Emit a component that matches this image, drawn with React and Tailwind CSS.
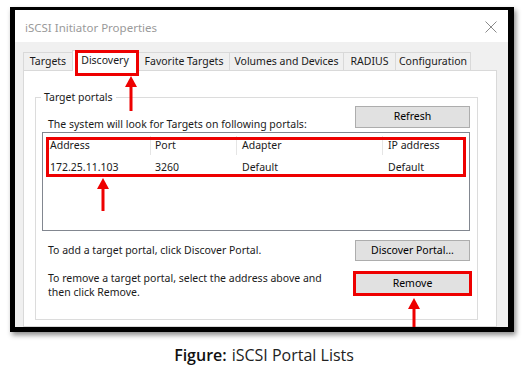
import React from 'react';

const ui = { fontFamily: '"Noto Sans", "Open Sans", sans-serif' };

function Arrow({ className, length }) {
  return (
    <svg className={className} width="12" height={length} viewBox={`0 0 12 ${length}`}>
      <polygon points="6,0 12,11 0,11" fill="#ee0000" />
      <rect x="4.5" y="10" width="3" height={length - 10} fill="#ee0000" />
    </svg>
  );
}

function Tab({ label, w, selected, children }) {
  if (selected) {
    return (
      <div
        className={`relative z-10 -mb-px h-[21px] bg-white border-l border-r border-t border-[#d9d9d9] flex items-center justify-center ${w}`}
      >
        <span className="-mt-[1px]">{label}</span>
        {children}
      </div>
    );
  }
  return (
    <div
      className={`h-[18px] bg-[#f0f0f0] border-l border-t border-[#d9d9d9] flex items-center justify-center ${w}`}
    >
      {label}
    </div>
  );
}

function Btn({ label, className = '', children }) {
  return (
    <div
      className={`relative w-[115px] bg-[#e1e1e1] border border-[#adadad] flex items-center justify-center text-black ${className}`}
    >
      {label}
      {children}
    </div>
  );
}

export default function App() {
  return (
    <div className="w-[523px] h-[376px] bg-white overflow-hidden">
      {/* screenshot frame */}
      <div
        className="ml-[10px] mt-[7px] w-[504px] h-[325px] border-l-[5px] border-t-[3px] border-r-[6px] border-b-[5px] border-black shadow-[2px_3px_5px_rgba(0,0,0,0.45)] flex flex-col bg-[#f0f0f0] overflow-hidden text-[10.5px] text-[#1a1a1a]"
        style={ui}
      >
        {/* title bar */}
        <div className="h-[32px] shrink-0 bg-white flex items-center pt-[3px] pl-[10px] pr-[11px]">
          <span className="text-[11.5px] text-[#9a9a9a]">iSCSI Initiator Properties</span>
          <svg className="ml-auto -mt-[1px]" width="12" height="12" viewBox="0 0 12 12">
            <path d="M0.5 0.5 L11.5 11.5 M11.5 0.5 L0.5 11.5" stroke="#8a8a8a" strokeWidth="1" />
          </svg>
        </div>

        {/* body */}
        <div className="flex-1 flex flex-col pt-[10px] pl-[8px] pr-[11px]">
          {/* tabs */}
          <div className="flex items-end h-[18px]">
            <Tab label="Targets" w="w-[49px]" />
            <Tab label="Discovery" w="w-[66px]" selected>
              <div className="absolute left-[2px] -top-[1px] w-[64px] h-[26px] border-[3px] border-[#ee0000]" />
              <Arrow className="absolute left-[52px] top-[25px]" length={35} />
            </Tab>
            <Tab label="Favorite Targets" w="w-[91px]" />
            <Tab label="Volumes and Devices" w="w-[114px]" />
            <Tab label="RADIUS" w="w-[52px]" />
            <div className="h-[18px] w-[76px] bg-[#f0f0f0] border-l border-t border-r border-[#d9d9d9] flex items-center justify-center">
              Configuration
            </div>
          </div>

          {/* tab panel */}
          <div className="flex-1 bg-white border border-[#d9d9d9] pt-[26px] pl-[11px] pr-[18px]">
            <div className="relative h-[223px] border border-[#dcdcdc] flex flex-col">
              <span className="absolute left-[5px] -top-[8px] bg-white px-[3px] leading-[14px]">Target portals</span>

              <div className="flex items-start pt-[8px]">
                <span className="mt-[11px] pl-[12px] leading-[14px]">
                  The system will look for Targets on following portals:
                </span>
                <Btn label="Refresh" className="ml-auto mr-[7px] h-[22px]" />
              </div>

              {/* list */}
              <div className="relative mt-px ml-[6px] mr-[7px] h-[99px] border border-[#828790] bg-white">
                <div className="flex h-[25px] items-center">
                  <div className="w-[107px] pl-[7px]">Address</div>
                  <div className="w-[86px] h-[19px] border-l border-[#e5e5e5] pl-[4px] flex items-center">Port</div>
                  <div className="w-[146px] h-[19px] border-l border-[#e5e5e5] pl-[5px] flex items-center">Adapter</div>
                  <div className="flex-1 h-[19px] border-l border-[#e5e5e5] pl-[5px] flex items-center">IP address</div>
                </div>
                <div className="flex h-[20px] items-center">
                  <div className="w-[107px] pl-[7px]">172.25.11.103</div>
                  <div className="w-[86px] pl-[5px]">3260</div>
                  <div className="w-[146px] pl-[6px]">Default</div>
                  <div className="flex-1 pl-[6px]">Default</div>
                </div>
                <div className="absolute left-[3px] top-[4px] w-[420px] h-[40px] border-[3px] border-[#ee0000]" />
                <Arrow className="absolute left-[54px] top-[45px]" length={33} />
              </div>

              <div className="flex items-center mt-[9px]">
                <span className="pl-[12px]">To add a target portal, click Discover Portal.</span>
                <Btn label="Discover Portal..." className="ml-auto mr-[7px] h-[21px]" />
              </div>

              <div className="flex items-start mt-[12px]">
                <span className="pl-[12px] -mt-[1px] leading-[13.5px]">
                  To remove a target portal, select the address above and
                  <br />
                  then click Remove.
                </span>
                <Btn label="Remove" className="ml-auto mr-[7px] h-[21px]">
                  <div className="absolute -left-[3px] -top-[3px] -right-[3px] -bottom-[3px] border-[3px] border-[#ee0000]" />
                  <Arrow className="absolute left-[52px] top-[24px]" length={34} />
                </Btn>
              </div>
            </div>
          </div>
        </div>
      </div>

      {/* caption */}
      <div
        className="mt-[11px] pl-[5px] flex justify-center text-[16px] leading-[24px] text-[#222]"
        style={{ fontFamily: '"Open Sans", "Noto Sans", sans-serif' }}
      >
        <span className="font-semibold text-[#111]">Figure:</span>
        <span className="ml-[5px]">iSCSI Portal Lists</span>
      </div>
    </div>
  );
}
